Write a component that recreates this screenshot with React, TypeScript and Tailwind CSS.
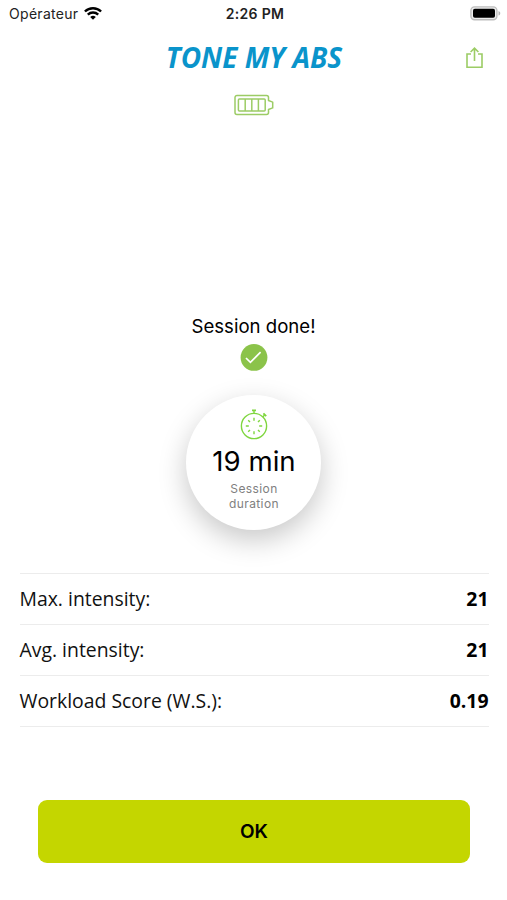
import React from 'react'

interface StatRowProps {
	label: string
	value: string
}

const stats: StatRowProps[] = [
	{ label: 'Max. intensity:', value: '21' },
	{ label: 'Avg. intensity:', value: '21' },
	{ label: 'Workload Score (W.S.):', value: '0.19' },
]

const App: React.FC = () => {
	return (
		<div className="flex h-[900px] w-[507px] flex-col overflow-hidden bg-white font-['Inter',sans-serif] text-black">
			<StatusBar />

			<header className="grid h-[60px] shrink-0 grid-cols-[60px_1fr_60px] items-center">
				<h1 className="col-start-2 pb-[2px] pl-px text-center font-['Open_Sans',sans-serif] text-[28px] leading-none font-bold whitespace-nowrap text-[#0a94cb] italic">
					TONE MY ABS
				</h1>
				<button className="ml-[18px] w-[20px]" aria-label="Share">
					<ShareIcon />
				</button>
			</header>

			<div className="flex h-[34px] shrink-0 items-center justify-center">
				<DeviceBattery />
			</div>

			<main className="flex flex-1 flex-col items-center pt-[191px]">
				<p className="h-[26px] text-[18.6px] leading-[26px]">Session done!</p>
				<CheckBadge />

				<div className="mt-[24px] flex h-[135px] w-[135px] shrink-0 flex-col items-center rounded-full bg-white pt-[13px] pl-px shadow-[0_10px_28px_rgba(0,0,0,0.22)]">
					<StopwatchIcon />
					<p className="mt-[4px] text-[27.6px] leading-[34px] whitespace-nowrap">
						19 min
					</p>
					<p className="mt-[4px] text-center text-[12px] leading-[14.5px] tracking-[0.4px] text-[#808080]">
						Session
						<br />
						duration
					</p>
				</div>

				<div className="mt-[43px] w-full pr-[18px] pl-[20px]">
					<div className="border-t border-[#ececec]">
						{stats.map((stat) => (
							<StatRow key={stat.label} {...stat} />
						))}
					</div>
				</div>

				<button className="mt-[73px] mr-[-1px] h-[63px] w-[432px] rounded-[9px] bg-[#c4d600] pt-px text-[19px] font-semibold">
					OK
				</button>
			</main>
		</div>
	)
}

const StatusBar: React.FC = () => {
	return (
		<div className="grid h-[28px] shrink-0 grid-cols-[1fr_auto_1fr] items-center pr-[6px] pb-[2px] pl-[9px]">
			<div className="flex items-center gap-[6px]">
				<span className="text-[14px] tracking-[0.3px] text-[#222]">
					Opérateur
				</span>
				<WifiIcon />
			</div>
			<span className="text-[14px] font-semibold tracking-[0.3px] text-[#222]">
				2:26 PM
			</span>
			<svg className="justify-self-end" width="31" height="15" viewBox="0 0 31 15">
				<rect x="0.9" y="0.9" width="26" height="12.8" rx="3.6" fill="#eee" stroke="#bdbdbd" strokeWidth="1.4" />
				<rect x="3" y="2.8" width="22" height="9" rx="1.8" fill="#000" />
				<path d="M28.5 5v4.6c2.4-.9 2.4-3.7 0-4.6Z" fill="#b5b5b5" />
			</svg>
		</div>
	)
}

const StatRow: React.FC<StatRowProps> = ({ label, value }) => {
	return (
		<div className="flex h-[51px] items-center justify-between border-b border-[#ececec] font-['Open_Sans',sans-serif] text-[19.4px] text-[#111]">
			<span className="-ml-[0.5px]">{label}</span>
			<span className="mr-[0.5px] font-bold text-black">{value}</span>
		</div>
	)
}

const WifiIcon: React.FC = () => (
	<svg width="18" height="13" viewBox="0 0 18 13" fill="none" stroke="#000" strokeWidth="2.4">
		<path d="M.9 4.5a11.8 11.8 0 0 1 16.2 0" />
		<path d="M3.8 7.6a7.6 7.6 0 0 1 10.4 0" />
		<path d="M9 12.8 6.2 10a4 4 0 0 1 5.6 0Z" fill="#000" stroke="none" />
	</svg>
)

const ShareIcon: React.FC = () => (
	<svg width="20" height="24" viewBox="0 0 20 24" fill="none" stroke="#9ccc65" strokeWidth="1.6">
		<path d="M6 8H2v13.2h15V8h-4" />
		<path d="M9.5 15V2.2M5.6 6l3.9-3.9L13.4 6" />
	</svg>
)

const DeviceBattery: React.FC = () => (
	<svg width="40" height="22" viewBox="0 0 40 22" fill="none" stroke="#9ccc65" strokeWidth="1.5" strokeLinejoin="round">
		<path d="M3 1.5h29.5a2 2 0 0 1 2 2v3l4.2 1.6v5.8l-4.2 1.6v3a2 2 0 0 1-2 2H3a2 2 0 0 1-2-2v-15a2 2 0 0 1 2-2Z" />
		<rect x="4.4" y="5" width="26.8" height="12" rx="1" />
		<path d="M11.2 5v12M17.8 5v12M24.4 5v12" />
	</svg>
)

const CheckBadge: React.FC = () => (
	<svg className="mt-[4px] shrink-0" width="28" height="28" viewBox="0 0 28 28">
		<circle cx="14" cy="14.4" r="13.4" fill="#8bc34a" />
		<path d="m6 15 4.4 4.4L20.6 9.2" fill="none" stroke="#fff" strokeWidth="1.7" />
	</svg>
)

const StopwatchIcon: React.FC = () => (
	<svg className="shrink-0" width="28" height="32" viewBox="0 0 28 32" fill="none" stroke="#7fd63f">
		<circle cx="14" cy="18" r="12.6" strokeWidth="1.4" />
		<path d="M14 5.6V3M22.8 9l1.8-1.9" strokeWidth="1.4" />
		<path d="M12 2.4h4M23.4 5.4l2.8 2.8" strokeWidth="1.8" />
		<path
			d="M14 9.8v3M14 23.2v3M5.8 18h3M19.2 18h3M8.2 12.2l1.8 1.8M18 22l1.8 1.8M8.2 23.8l1.8-1.8M18 14l1.8-1.8"
			strokeWidth="1.4"
		/>
	</svg>
)

export default App
